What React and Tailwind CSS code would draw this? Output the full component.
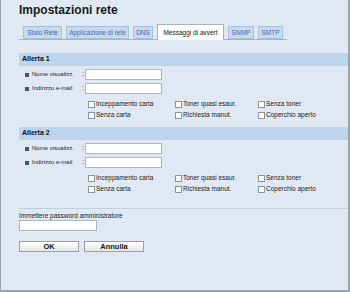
import React from 'react';

const tabs = [
    ['Stato Rete', 'w-[39px]'],
    ['Applicazione di rete', 'w-[63px]'],
    ['DNS', 'w-[20px]'],
    ['Messaggi di avvert', 'w-[67px]'],
    ['SNMP', 'w-[26px]'],
    ['SMTP', 'w-[25px]'],
];
const checks = ['Inceppamento carta', 'Toner quasi esaur.', 'Senza toner', 'Senza carta', 'Richiesta manut.', 'Coperchio aperto'];

const Field = ({ label }) => (
    <div className="flex items-center h-[11px]">
        <span className="ml-[6px] w-[4px] h-[4px] bg-[#3d5482]" />
        <span className="ml-[3px] w-[50px] text-[6px] text-[#222] whitespace-nowrap">{label}</span>
        <span className="text-[7px] text-[#222] w-[3px]">:</span>
        <div className="w-[77px] h-[11px] bg-white border border-[#a9b6c4]" />
    </div>
);

const Alert = ({ title }) => (
    <div>
        <div className="h-[13px] bg-[#bcd5ed] flex items-center pl-[3px] text-[7px] font-bold text-[#111]">{title}</div>
        <div className="mt-[3px] flex flex-col gap-[3px]">
            <Field label="Nome visualizz." />
            <Field label="Indirizzo e-mail" />
        </div>
        <div className="mt-[7px] ml-[69px] grid grid-cols-[87px_83px_auto] gap-y-[4px]">
            {checks.map(c => (
                <div key={c} className="flex items-center h-[7px]">
                    <span className="w-[7px] h-[7px] bg-white border border-[#8a949e]" />
                    <span className="ml-[1px] text-[6.5px] text-[#222] leading-none whitespace-nowrap">{c}</span>
                </div>
            ))}
        </div>
    </div>
);

export default function App() {
    return (
        <div className="w-[350px] h-[292px] bg-[#dfe8f3] border-l border-r-2 border-b-2 border-[#9aa3ad] overflow-hidden" style={{ fontFamily: '"Liberation Sans", Arial, sans-serif' }}>
            <div className="pl-[18px] pt-[2px] text-[12px] font-bold text-[#1a1a1a] leading-[17px]">Impostazioni rete</div>
            <div className="ml-[18px] mt-[2px] w-[268px] h-[19px] border-b border-[#a9b3bd] flex items-end pl-[4px] gap-[4px]">
                {tabs.map(([t, w]) => t === 'Messaggi di avvert' ? (
                    <div key={t} className={`${w} h-[16px] -mb-px bg-white border border-b-0 border-[#a9b3bd] flex items-center justify-center text-[6.5px] text-[#111] whitespace-nowrap`}>{t}</div>
                ) : (
                    <div key={t} className={`${w} h-[13px] bg-[#c4daf0] border border-[#a9c0d6] flex items-center justify-center text-[6.5px] text-[#4a67a8] whitespace-nowrap`}>{t}</div>
                ))}
            </div>
            <div className="ml-[18px] mt-[13px]">
                <Alert title="Allerta 1" />
                <div className="mt-[8px]">
                    <Alert title="Allerta 2" />
                </div>
                <div className="mt-[15px] h-px bg-[#c3cfdc]" />
                <div className="mt-[3px] text-[6.5px] text-[#222] leading-[8px]">Immettere password amministratore</div>
                <div className="mt-0 w-[78px] h-[11px] bg-white border border-[#a9b6c4]" />
                <div className="mt-[10px] flex gap-[5px]">
                    <button className="w-[60px] h-[11px] bg-gradient-to-b from-white to-[#e6e6e6] border border-[#9aa0a6] text-[7.5px] font-bold text-[#111] leading-none">OK</button>
                    <button className="w-[60px] h-[11px] bg-gradient-to-b from-white to-[#e6e6e6] border border-[#9aa0a6] text-[7.5px] font-bold text-[#111] leading-none">Annulla</button>
                </div>
            </div>
        </div>
    );
}
